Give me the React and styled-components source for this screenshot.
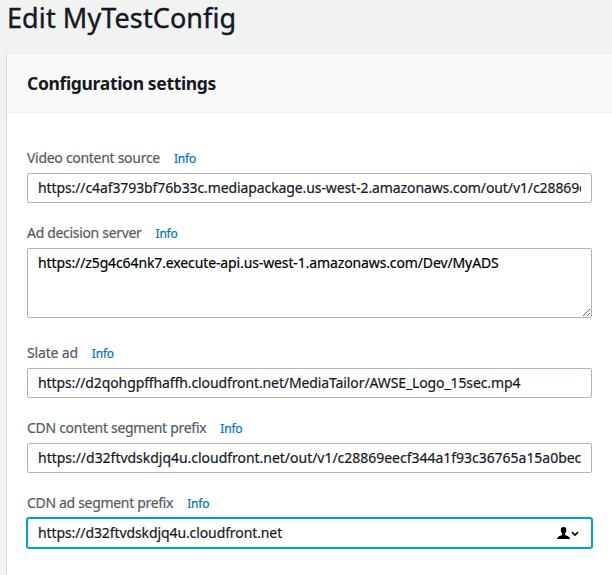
import React from "react";
import styled, { createGlobalStyle, css } from "styled-components";

const GlobalStyle = createGlobalStyle`
  *, *::before, *::after { box-sizing: border-box; }
  html, body { margin: 0; padding: 0; overflow: hidden; }
  body {
    background: #f1f3f3;
    color: #16191f;
    font-family: "Noto Sans", "Open Sans", sans-serif;
    font-size: 14px;
    -webkit-text-stroke-width: 0.2px;
  }
`;

const Page = styled.main`
  display: flex;
  flex-direction: column;
  height: 100vh;
  padding-left: 6px;
  overflow: hidden;
`;

const Title = styled.h1`
  flex: none;
  height: 53px;
  margin: 0;
  padding-left: 1px;
  font-size: 27px;
  font-weight: 400;
  line-height: 36px;
  letter-spacing: 0.1px;
  -webkit-text-stroke-width: 0.4px;
`;

const Card = styled.section`
  flex: 1;
  display: flex;
  flex-direction: column;
  background: #fff;
  border-top: 1px solid #eaeded;
  border-left: 1px solid #d5dbdb;
`;

const CardHeader = styled.header`
  flex: none;
  display: flex;
  align-items: center;
  height: 59px;
  padding: 0 20px 1px;
  background: #fafafa;
  border-bottom: 1px solid #eaeded;
`;

const CardTitle = styled.h2`
  margin: 0;
  font-size: 17.5px;
  font-weight: 700;
  line-height: 22px;
  letter-spacing: -0.34px;
  -webkit-text-stroke-width: 0;
`;

const Form = styled.form`
  display: flex;
  flex-direction: column;
  gap: 20px;
  padding: 35px 20px 0;
`;

const Field = styled.div`
  display: flex;
  flex-direction: column;
  gap: 5px;
  padding-bottom: ${(p) => (p.$multiline ? "5px" : "0")};
`;

const FieldHeading = styled.div`
  display: flex;
  align-items: flex-start;
  gap: 14px;
  height: 20px;
`;

const Label = styled.label`
  color: #545b64;
  line-height: 20px;
  letter-spacing: ${(p) => p.$tracking ?? -0.29}px;
  white-space: nowrap;
`;

const InfoLink = styled.a`
  color: #0073bb;
  font-size: 12px;
  line-height: 22px;
  letter-spacing: -0.2px;
  text-decoration: none;
`;

const control = css`
  display: block;
  width: 565px;
  margin: 0;
  border: 1px solid #aab7b8;
  border-radius: 2px;
  background: #fff;
  color: #16191f;
  font: inherit;
  letter-spacing: ${(p) => p.$tracking}px;
  outline: none;
`;

const TextInput = styled.input`
  ${control}
  height: 30px;
  padding: 0 10px 1px;
  ${(p) =>
    p.$active &&
    css`
      border-color: #00a1c9;
      box-shadow: 0 0 0 1px #00a1c9;
    `}
`;

const TextArea = styled.textarea`
  ${control}
  height: 70px;
  padding: 4px 10px;
  color: #000;
  line-height: 20px;
  resize: vertical;
`;

const InputWrap = styled.div`
  position: relative;
  width: 565px;
`;

const AutofillButton = styled.button`
  position: absolute;
  top: 8px;
  right: 12px;
  display: flex;
  padding: 0;
  border: 0;
  background: none;
`;

const fields = [
  {
    id: "video",
    label: "Video content source",
    value:
      "https://c4af3793bf76b33c.mediapackage.us-west-2.amazonaws.com/out/v1/c28869eecf344a1f93c36765a15a0bec",
    tracking: -0.1,
  },
  {
    id: "ads",
    label: "Ad decision server",
    labelTracking: -0.32,
    value: "https://z5g4c64nk7.execute-api.us-west-1.amazonaws.com/Dev/MyADS",
    tracking: -0.12,
    multiline: true,
  },
  {
    id: "slate",
    label: "Slate ad",
    labelTracking: -0.17,
    value: "https://d2qohgpffhaffh.cloudfront.net/MediaTailor/AWSE_Logo_15sec.mp4",
    tracking: -0.11,
  },
  {
    id: "cdn-content",
    label: "CDN content segment prefix",
    value:
      "https://d32ftvdskdjq4u.cloudfront.net/out/v1/c28869eecf344a1f93c36765a15a0bec",
    tracking: -0.025,
  },
  {
    id: "cdn-ad",
    label: "CDN ad segment prefix",
    labelTracking: -0.32,
    value: "https://d32ftvdskdjq4u.cloudfront.net",
    tracking: -0.1,
    active: true,
  },
];

function ContactIcon() {
  return (
    <svg width="24" height="14" viewBox="0 0 24 14" aria-hidden="true">
      <path
        d="M7.6 1C5.700 1 4.700 2.200 4.800 4c.1 1.600.6 2.700 1.300 3.400v1.300C5.900 9.800 1.400 9.700 1 13h13.200c-.4-3.300-4.800-3.200-5.100-4.300V7.400c.7-.7 1.200-1.800 1.300-3.400C10.500 2.200 9.500 1 7.600 1z"
        fill="#000"
      />
      <path d="M16 6.200l3 2.900 3-2.900" fill="none" stroke="#000" strokeWidth="1.6" />
    </svg>
  );
}

function Control({ field }) {
  if (field.multiline) {
    return (
      <TextArea
        id={field.id}
        $tracking={field.tracking}
        defaultValue={field.value}
        spellCheck={false}
      />
    );
  }
  const input = (
    <TextInput
      id={field.id}
      type="text"
      $tracking={field.tracking}
      $active={field.active}
      defaultValue={field.value}
      spellCheck={false}
    />
  );
  if (!field.active) return input;
  return (
    <InputWrap>
      {input}
      <AutofillButton type="button" aria-label="Autofill contact">
        <ContactIcon />
      </AutofillButton>
    </InputWrap>
  );
}

export default function App() {
  return (
    <>
      <GlobalStyle />
      <Page>
        <Title>Edit MyTestConfig</Title>
        <Card>
          <CardHeader>
            <CardTitle>Configuration settings</CardTitle>
          </CardHeader>
          <Form>
            {fields.map((field) => (
              <Field key={field.id} $multiline={field.multiline}>
                <FieldHeading>
                  <Label htmlFor={field.id} $tracking={field.labelTracking}>
                    {field.label}
                  </Label>
                  <InfoLink href="#">Info</InfoLink>
                </FieldHeading>
                <Control field={field} />
              </Field>
            ))}
          </Form>
        </Card>
      </Page>
    </>
  );
}
